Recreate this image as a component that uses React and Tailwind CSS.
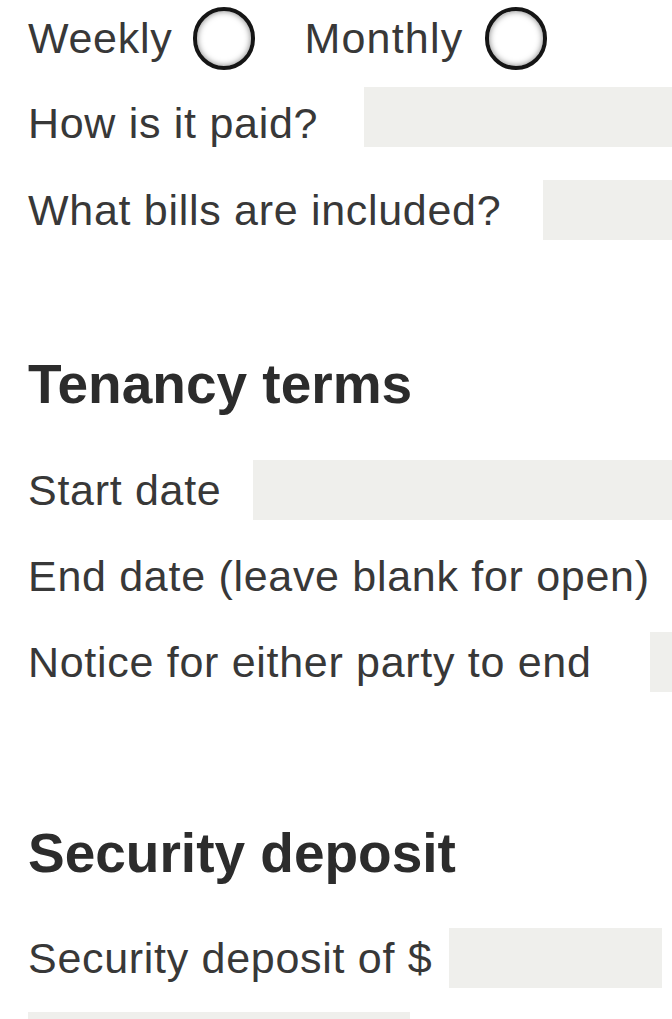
const labelCls = "whitespace-nowrap text-[43px] leading-none tracking-[0.7px] text-[#383838]";
const fieldCls = "h-[60px] shrink-0 bg-[#efefec]";

function Radio() {
  return (
    <span className="block h-[63px] w-[62px] shrink-0 rounded-full border-[4px] border-[#151515] bg-white shadow-[inset_0_0_6px_rgba(0,0,0,0.5)]" />
  );
}

function Row({ label, gap, width, drop, className }) {
  return (
    <div className={`flex h-[60px] items-center ${className}`}>
      <span className={`${labelCls} ${drop ? "pt-[12px]" : ""}`}>{label}</span>
      <span className={fieldCls} style={{ marginLeft: gap, width: width || 420 }} />
    </div>
  );
}

function Heading({ children, className }) {
  return (
    <h2 className={`whitespace-nowrap text-[55px] font-bold leading-none tracking-[0px] text-[#2c2c2c] ${className}`}>
      {children}
    </h2>
  );
}

export default function App() {
  return (
    <div
      className="h-[1019px] w-[672px] overflow-hidden bg-white pl-[28px]"
      style={{ fontFamily: '"Liberation Sans", Arial, sans-serif' }}
    >
      <div className="mt-[7px] flex h-[63px] items-center">
        <span className={labelCls}>Weekly</span>
        <span className="ml-[21px]"><Radio /></span>
        <span className={`${labelCls} ml-[49px] tracking-[1.2px]`}>Monthly</span>
        <span className="ml-[22px]"><Radio /></span>
      </div>

      <Row label="How is it paid?" gap={46} drop className="mt-[17px]" />
      <Row label="What bills are included?" gap={42} className="mt-[33px]" />

      <Heading className="mt-[117px]">Tenancy terms</Heading>

      <Row label="Start date" gap={32} className="mt-[48px]" />
      <Row label="End date (leave blank for open)" gap={30} className="mt-[26px]" />
      <Row label="Notice for either party to end" gap={58} className="mt-[26px]" />

      <Heading className="mt-[134px]">Security deposit</Heading>

      <Row label="Security deposit of $" gap={17} width={213} className="mt-[47px]" />
      <div className="mt-[24px] h-[60px] w-[382px] bg-[#efefec]" />
    </div>
  );
}
